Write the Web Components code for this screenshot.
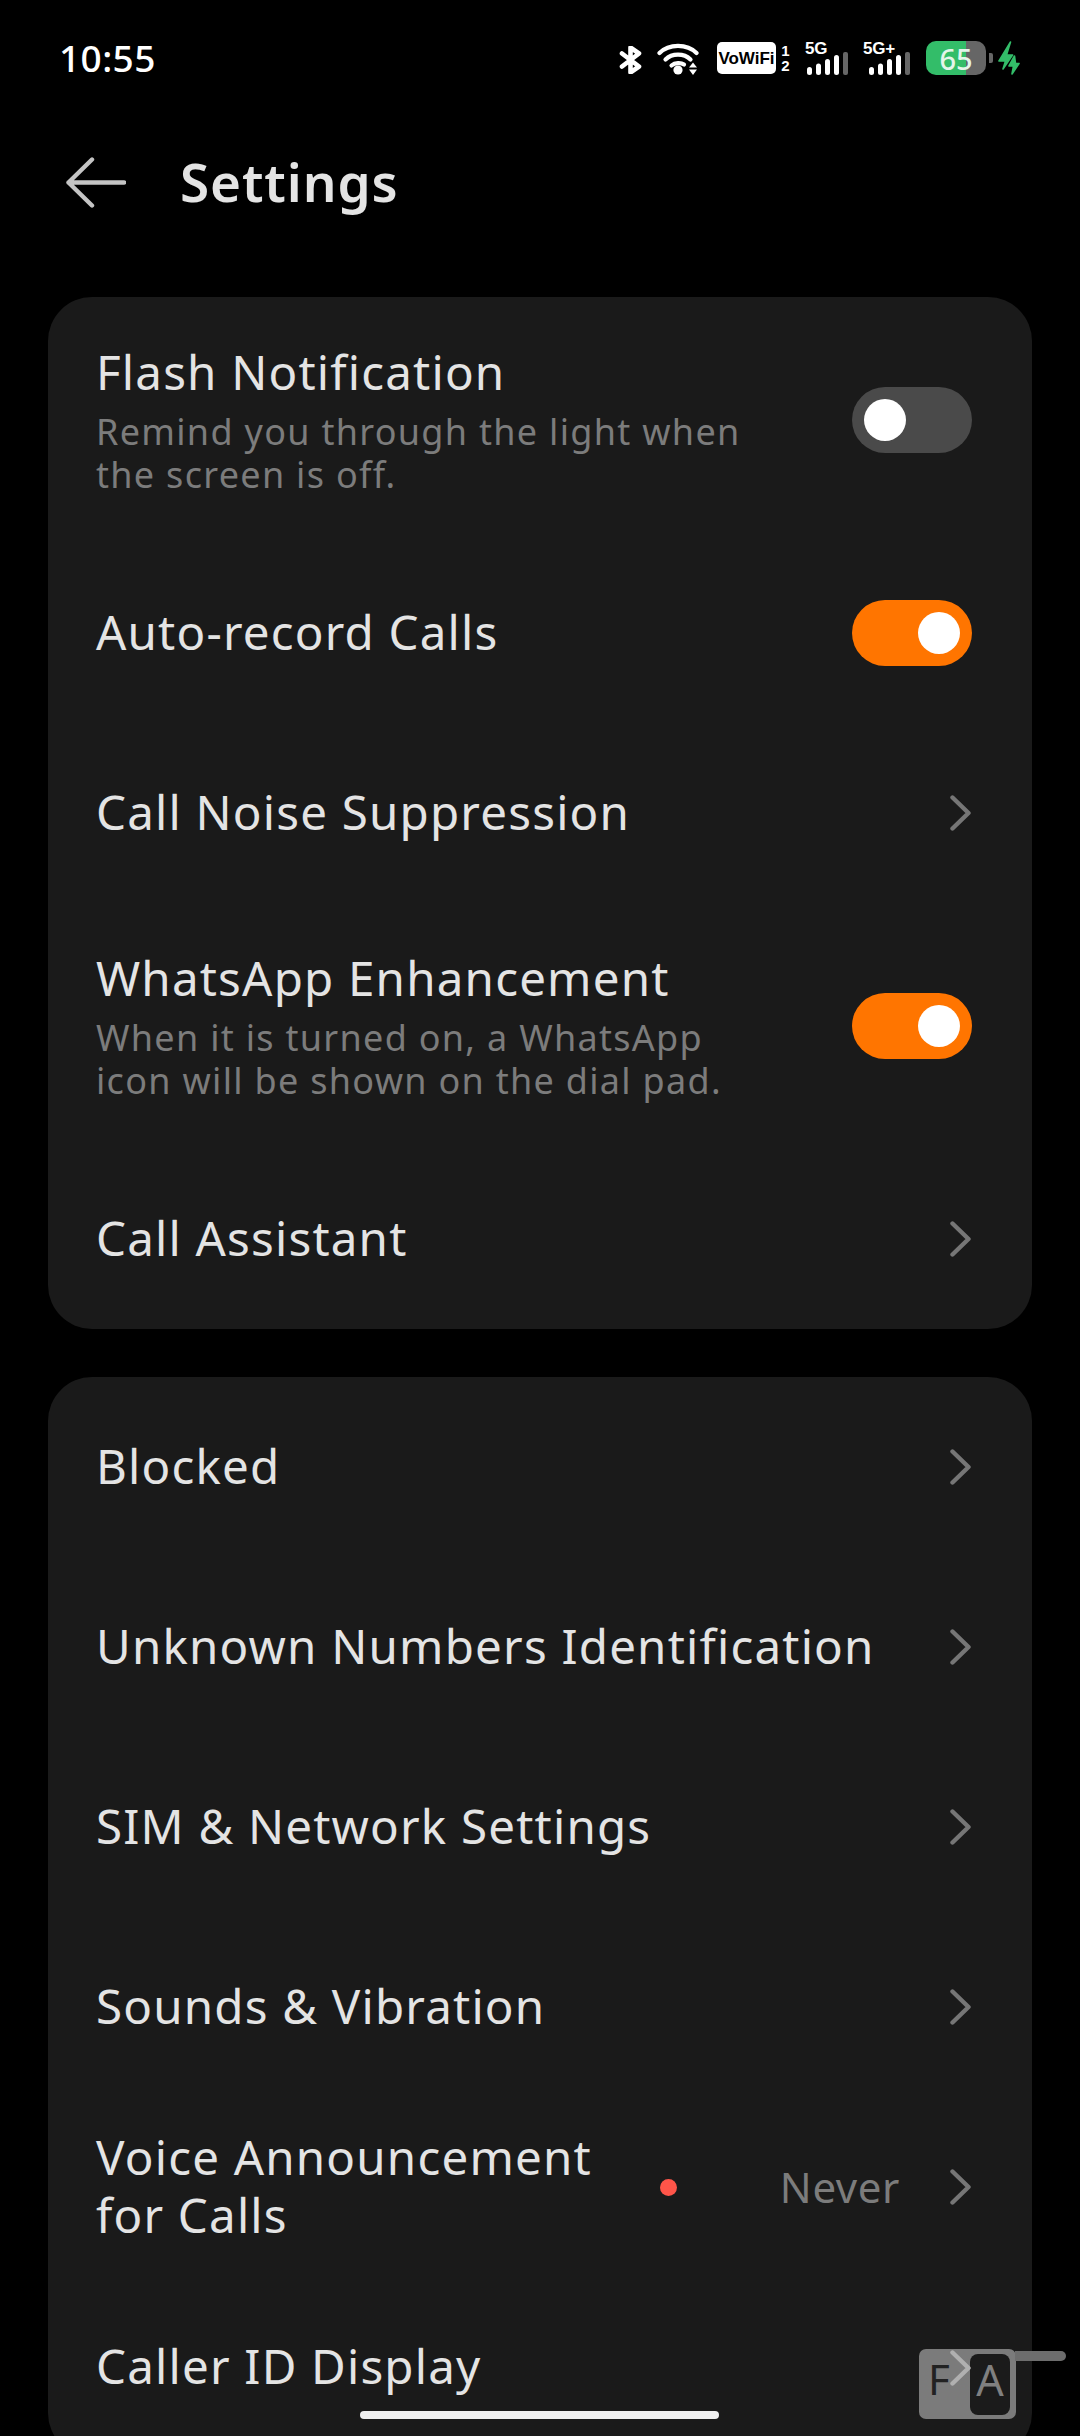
<!DOCTYPE html>
<html><head><meta charset="utf-8">
<style>
html,body{margin:0;padding:0;background:#000;width:1080px;height:2436px;overflow:hidden;font-family:"Noto Sans",sans-serif}
#app{display:block;position:relative;width:1080px;height:2436px;overflow:hidden}
</style></head><body>
<settings-app id="app"></settings-app>
<script>
function def(name,css,html){
  customElements.define(name,class extends HTMLElement{
    constructor(){super();this.attachShadow({mode:'open'});}
    connectedCallback(){
      const body=typeof html==='function'?html(this):html;
      this.shadowRoot.innerHTML='<style>'+css+'</style>'+body;
    }
  });
}
const chev='<svg width="22" height="36" viewBox="0 0 22 36"><path d="M2.5 2.5 18.5 18 2.5 33.5" fill="none" stroke="#767676" stroke-width="4.4" stroke-linecap="round" stroke-linejoin="round"/></svg>';
const bars='<svg width="42" height="23" viewBox="0 0 42 23"><g fill="#fff"><rect x="0" y="15" width="5" height="8" rx="2.5"/><rect x="9" y="11.5" width="5" height="11.5" rx="2.5"/><rect x="18" y="7" width="5" height="16" rx="2.5"/><rect x="27" y="3" width="5" height="20" rx="2.5"/></g><rect x="36" y="0" width="5" height="23" rx="2" fill="#666"/></svg>';

def('status-bar',`
:host{display:flex;align-items:center;justify-content:space-between;height:72px;padding:22px 60px 0 59px;color:#fff;box-sizing:content-box}
.t{font:500 37px/1 "Noto Sans",sans-serif;letter-spacing:.4px;color:#fff;margin-top:-1px}
.icons{display:flex;align-items:center}
svg{display:block}
.vo{display:flex;align-items:center;justify-content:center;width:59px;height:32px;border-radius:5px;background:#fff;color:#000;font:700 17px/1 "Liberation Sans",sans-serif;margin-left:17px}
.sim{display:flex;flex-direction:column;font:700 15px/15px "Liberation Sans",sans-serif;margin-left:5px;color:#fff;width:9px;text-align:center}
.net{position:relative;margin-left:15px;width:44px;height:34px}
.net.plus{margin-left:14px;width:48px}
.net span{position:absolute;left:0;top:-1px;font:700 17px/1 "Liberation Sans",sans-serif;letter-spacing:-.2px}
.net svg{position:absolute;left:2px;bottom:0}
.net.plus svg{left:6px}
.bat{margin-left:15px;width:60px;height:34px;border-radius:10px;background:linear-gradient(90deg,#33bd69 0 40px,#666 40px);display:flex;align-items:center;justify-content:center;color:#e4f5ea;font:500 29px/1 "Noto Sans",sans-serif;box-sizing:border-box}
.nub{width:4px;height:10px;background:#666;border-radius:0 2px 2px 0;margin-left:3px}
`,`<span class="t">10:55</span><div class="icons">
<svg style="margin-top:3px" width="24" height="28" viewBox="0 0 24 28"><path d="M3 7.5 20 20.5 11.5 26.5V1.5L20 7.5 3 20.5" fill="none" stroke="#fff" stroke-width="4.6" stroke-linejoin="round" stroke-linecap="round"/></svg>
<svg style="margin-left:14px" width="43" height="33" viewBox="0 0 43 33"><g fill="none" stroke="#fff" stroke-width="4.2" stroke-linecap="round"><path d="M2.5 11C12 1.5 30 1.5 39.5 11"/><path d="M8.5 17.5C15 11 27 11 33.5 17.5"/><path d="M14.5 23.5C18 20.5 24 20.5 27 22.5"/></g><circle cx="21" cy="28" r="4.6" fill="#fff"/><path d="M36 20.5 40 25.5H32ZM36 33 32 27.5H40Z" fill="#fff"/></svg>
<div class="vo">VoWiFi</div><div class="sim"><span>1</span><span>2</span></div>
<div class="net"><span>5G</span>${bars}</div>
<div class="net plus"><span>5G+</span>${bars}</div>
<div class="bat">65</div><div class="nub"></div>
<svg style="margin-left:5px" width="22" height="34" viewBox="0 0 22 34"><path d="M12.5 1 1 20H7.5L5 28 14.5 14H8.5ZM16.5 15 11 25H15.5L14 33 21 22.5H17.5Z" fill="#33bd69" stroke="#33bd69" stroke-width="1.6" stroke-linejoin="round"/></svg>
</div>`);

def('app-header',`
:host{display:flex;align-items:center;height:108px;padding-left:66px;margin-top:35px}
h1{margin:0 0 3px 54px;font:600 53px/1 "Noto Sans",sans-serif;color:#e4e4e4;letter-spacing:.9px}
svg{display:block}
`,`<svg width="60" height="52" viewBox="0 0 60 52"><path d="M26 2.5 2.5 25.5 26 48.5M2.5 25.5H58" fill="none" stroke="#c4c4c4" stroke-width="4.4" stroke-linecap="round" stroke-linejoin="round"/></svg><h1><slot></slot></h1>`);

def('setting-card',`
:host{display:block;background:#1a1a1a;border-radius:44px;margin:0 48px 48px}
`,`<slot></slot>`);

def('switch-toggle',`
:host{display:block;flex:none;width:120px;height:66px;border-radius:33px;background:#4a4a4a;position:relative}
:host([on]){background:#ff7500}
i{position:absolute;top:12px;left:12px;width:42px;height:42px;border-radius:50%;background:#fff}
:host([on]) i{left:66px}
`,`<i></i>`);

def('setting-row',`
:host{display:flex;align-items:center;box-sizing:border-box;height:180px;padding:0 60px 0 48px;color:#e4e4e4}
:host([tall]){height:246px}
:host([tall]) .main{margin-top:2px}
.main{flex:1;min-width:0}
.title{font:400 47.5px/58px "Noto Sans",sans-serif;letter-spacing:1.2px;color:#e4e4e4;margin-top:-3px}
.sub{font:400 36px/43px "Noto Sans",sans-serif;letter-spacing:1.3px;color:#7c7c7c;margin-top:9px;width:660px}
.sub:empty{display:none}
.end{display:flex;align-items:center;flex:none}
.val{font:400 42px/1 "Noto Sans",sans-serif;letter-spacing:.6px;color:#7c7c7c;margin-right:50px}
.dot{width:17px;height:17px;border-radius:50%;background:#ff5549;margin-right:103px}
svg{display:block}
`,el=>{
  const sub=el.getAttribute('sub')||'';
  const ctrl=el.hasAttribute('toggle')?`<switch-toggle ${el.getAttribute('toggle')==='on'?'on':''}></switch-toggle>`:chev;
  const dot=el.hasAttribute('dot')?'<span class="dot"></span>':'';
  const val=el.getAttribute('value')?`<span class="val">${el.getAttribute('value')}</span>`:'';
  return `<div class="main"><div class="title"><slot></slot></div><div class="sub">${sub}</div></div><div class="end">${dot}${val}${ctrl}</div>`;
});

def('home-bar',`
:host{display:block;position:absolute;left:360px;top:2411px;width:359px;height:8px;border-radius:4px;background:#efefef}
`,``);

def('fa-badge',`
:host{display:block;position:absolute;left:919px;top:2349px;width:97px;height:70px;border-radius:7px;background:#7b7b7b}
.f{position:absolute;left:9px;top:9px;font:400 42px/1 "Noto Sans",sans-serif;color:#222}
.a{position:absolute;left:51px;top:5px;width:40px;height:61px;border-radius:8px;background:#1b1b1b;color:#808080;font:400 43px/52px "Noto Sans",sans-serif;text-align:center}
.bar{position:absolute;left:96px;top:2px;width:51px;height:10px;border-radius:0 5px 5px 0;background:#6d6d6d}
svg{position:absolute;left:31px;top:1px}
`,`<span class="f">F</span><span class="a">A</span><span class="bar"></span><svg width="22" height="36" viewBox="0 0 22 36"><path d="M2.5 2.5 18.5 18 2.5 33.5" fill="none" stroke="#b0b0b0" stroke-width="4.4" stroke-linecap="round" stroke-linejoin="round"/></svg>`);

def('settings-app',`
:host{display:block;position:relative;width:1080px;height:2436px;overflow:hidden;background:#000}
.list{margin-top:60px}
`,`<status-bar></status-bar><app-header>Settings</app-header>
<div class="list">
<setting-card>
<setting-row tall toggle="off" sub="Remind you through the light when the screen is off.">Flash Notification</setting-row>
<setting-row toggle="on">Auto-record Calls</setting-row>
<setting-row>Call Noise Suppression</setting-row>
<setting-row tall toggle="on" sub="When it is turned on, a WhatsApp icon will be shown on the dial pad.">WhatsApp Enhancement</setting-row>
<setting-row>Call Assistant</setting-row>
</setting-card>
<setting-card>
<setting-row>Blocked</setting-row>
<setting-row>Unknown Numbers Identification</setting-row>
<setting-row>SIM &amp; Network Settings</setting-row>
<setting-row>Sounds &amp; Vibration</setting-row>
<setting-row dot value="Never">Voice Announcement<br>for Calls</setting-row>
<setting-row>Caller ID Display</setting-row>
</setting-card>
</div>
<fa-badge></fa-badge><home-bar></home-bar>`);
</script>
</body></html>
